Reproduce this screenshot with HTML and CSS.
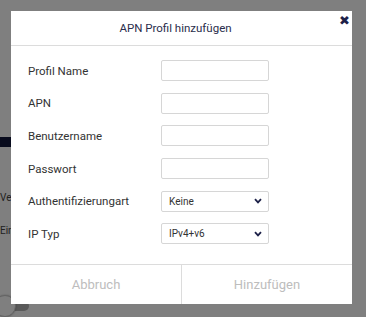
FILE: index.html
```html
<!DOCTYPE html>
<html lang="de">
<head>
<meta charset="utf-8">
<title>APN Profil hinzufügen</title>
<link rel="stylesheet" href="styles.css">
</head>
<body>
<div class="page">
  <div class="page-bar"></div>
  <div class="page-row">Ve</div>
  <div class="page-row">Ein</div>
  <div class="toggle"><span class="knob"></span></div>
</div>
<div class="overlay"></div>
<div class="modal">
  <div class="modal-header">
    <span class="modal-title">APN Profil hinzufügen</span>
    <span class="close">&#x2716;</span>
  </div>
  <div class="modal-body">
    <div class="row"><label class="label">Profil Name</label><input class="field" type="text"></div>
    <div class="row"><label class="label">APN</label><input class="field" type="text"></div>
    <div class="row"><label class="label">Benutzername</label><input class="field" type="text"></div>
    <div class="row"><label class="label">Passwort</label><input class="field" type="password"></div>
    <div class="row"><label class="label">Authentifizierungart</label>
      <div class="select"><span>Keine</span><svg class="chev" viewBox="0 0 8 6" width="8" height="6"><path d="M1 1.2 L4 4.4 L7 1.2" fill="none" stroke="#1d2148" stroke-width="1.8"/></svg></div></div>
    <div class="row"><label class="label">IP Typ</label>
      <div class="select"><span>IPv4+v6</span><svg class="chev" viewBox="0 0 8 6" width="8" height="6"><path d="M1 1.2 L4 4.4 L7 1.2" fill="none" stroke="#1d2148" stroke-width="1.8"/></svg></div></div>
  </div>
  <div class="modal-footer">
    <button class="btn">Abbruch</button>
    <button class="btn">Hinzufügen</button>
  </div>
</div>
</body>
</html>
```
FILE: styles.css
```css
* { box-sizing: border-box; }
html, body { margin: 0; padding: 0; }
body {
  width: 366px;
  height: 317px;
  overflow: hidden;
  background: #fff;
  font-family: Roboto, "Noto Sans", sans-serif;
  position: relative;
}
.page {
  padding-top: 137px;
  display: flex;
  flex-direction: column;
  align-items: flex-start;
}
.page-bar {
  width: 40px;
  height: 10px;
  background: #10163a;
}
.page-row {
  font-size: 10px;
  color: #444;
  height: 33px;
  line-height: 12px;
}
.page-bar + .page-row { margin-top: 45px; }
.toggle {
  margin-top: 43px;
  width: 40px;
  height: 10px;
  margin-left: -11px;
  background: #b4b4b4;
  border-radius: 5px;
  position: relative;
}
.knob {
  position: absolute;
  left: 5px;
  top: -6px;
  width: 22px;
  height: 22px;
  border-radius: 50%;
  background: #fff;
  border: 1px solid #c8c8c8;
  box-shadow: 0 0 2px rgba(0,0,0,.3);
}
.overlay {
  position: fixed;
  inset: 0;
  background: rgba(0,0,0,0.5);
}
.modal {
  position: fixed;
  left: 11px;
  top: 11px;
  width: 341px;
  height: 293px;
  background: #fff;
  display: flex;
  flex-direction: column;
}
.modal-header {
  height: 35px;
  border-bottom: 1px solid #dcdcdc;
  display: flex;
  align-items: center;
  justify-content: center;
  padding-right: 12px;
  position: relative;
}
.modal-title {
  font-size: 11.5px;
  color: #2a2d4c;
}
.close {
  position: absolute;
  right: 2px;
  top: 3px;
  font-size: 12.5px;
  color: #1d2148;
  line-height: 14px;
}
.modal-body {
  flex: 1;
  padding: 14px 0 0 17px;
  display: flex;
  flex-direction: column;
  gap: 11.7px;
}
.row {
  display: flex;
  align-items: center;
  height: 21px;
}
.label {
  width: 133px;
  font-size: 11.5px;
  color: #333;
}
.field {
  width: 108px;
  height: 21px;
  border: 1px solid #d6d6d6;
  border-radius: 2px;
  margin: 0;
  padding: 0 6px;
  font: inherit;
  font-size: 10px;
  outline: none;
  background: #fff;
}
.select {
  width: 108px;
  height: 21px;
  border: 1px solid #d6d6d6;
  border-radius: 2px;
  display: flex;
  align-items: center;
  justify-content: space-between;
  padding: 0 6px 0 7px;
  font-size: 10px;
  color: #333;
}
.chev { display: block; }
.modal-footer {
  height: 40px;
  border-top: 1px solid #dcdcdc;
  display: grid;
  grid-template-columns: 170px 1fr;
}
.btn {
  border: 0;
  background: #fff;
  font: inherit;
  font-size: 13px;
  color: #bdbdbd;
  padding: 0;
  margin: 0;
}
.btn + .btn { border-left: 1px solid #dcdcdc; }
```
